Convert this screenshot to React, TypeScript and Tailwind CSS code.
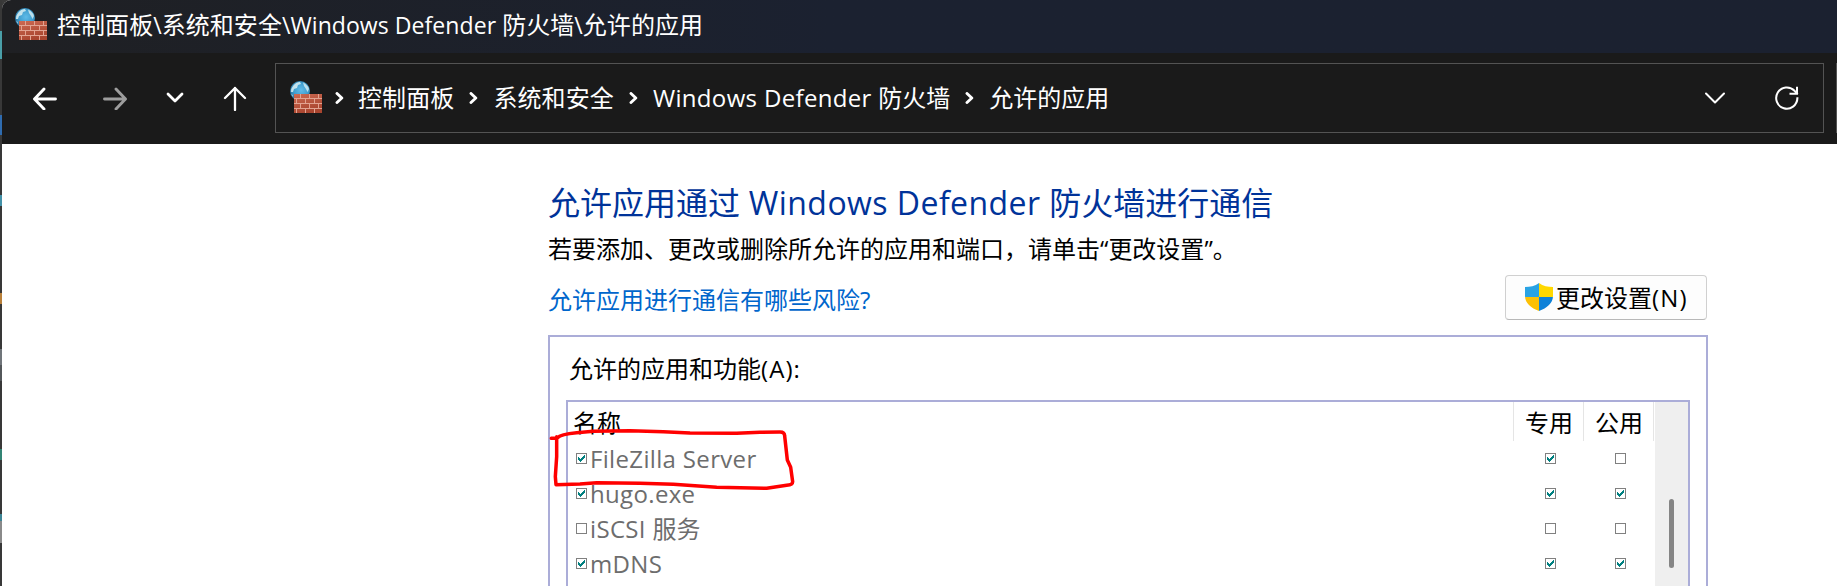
import React from "react";

const CJK = "font-['Noto_Sans_CJK_SC',sans-serif]";
const LATIN = "whitespace-pre font-['Open_Sans','Noto_Sans',sans-serif]";

/* Latin runs get a humanist face next to the Chinese glyphs. */
function Mixed({ text, latin = "tracking-[0.014em]" }: { text: string; latin?: string }) {
  const runs = text.match(/[\x20-\x7e]+|[^\x20-\x7e]+/g) ?? [];
  return (
    <>
      {runs.map((run, i) =>
        /^[\x20-\x7e]/.test(run) ? (
          <span key={i} className={LATIN + " " + latin}>
            {run}
          </span>
        ) : (
          <span key={i}>{run}</span>
        )
      )}
    </>
  );
}

function FirewallIcon({ id }: { id: string }) {
  return (
    <svg width="34" height="34" viewBox="0 0 34 34" className="shrink-0">
      <defs>
        <radialGradient id={id + "g"} cx="0.55" cy="0.45" r="0.6">
          <stop offset="0" stopColor="#5fbbe8" />
          <stop offset="0.6" stopColor="#3f9dce" />
          <stop offset="1" stopColor="#256f9c" />
        </radialGradient>
        <linearGradient id={id + "b"} x1="0" y1="0" x2="0.4" y2="1">
          <stop offset="0" stopColor="#cc6a52" />
          <stop offset="1" stopColor="#a9452f" />
        </linearGradient>
      </defs>
      <circle cx="11" cy="11" r="10" fill={`url(#${id}g)`} />
      <path d="M4 6 Q7 2 11 2 L12 4 L9 5 L8 8 L5 9 L4 12 L2 12 Q2 8 4 6Z" fill="#d9eff2" opacity="0.85" />
      <path d="M14 2.5 Q19 5 20 9 L18.5 12 L17 9 L15 6Z" fill="#d9eff2" opacity="0.8" />
      <path d="M2 14 L4 15 L4 17Z" fill="#d9eff2" opacity="0.6" />
      <rect x="5" y="14" width="28" height="19" fill={`url(#${id}b)`} />
      <path
        d="M5 18.5H33M5 23.5H33M5 28.5H33M11.5 14V18.5M20.5 14V18.5M29.5 14V18.5M7.5 18.5V23.5M16.5 18.5V23.5M25.5 18.5V23.5M11.5 23.5V28.5M20.5 23.5V28.5M29.5 23.5V28.5M7.5 28.5V33M16.5 28.5V33M25.5 28.5V33"
        stroke="#e2a391"
        strokeWidth="1"
        fill="none"
      />
    </svg>
  );
}

function Shield() {
  return (
    <svg width="28" height="28" viewBox="0 0 28 28" className="shrink-0">
      <defs>
        <clipPath id="shield">
          <path d="M14 0 C10 3 5 4 0 4 V13 C0 20 6 25 14 28 C22 25 28 20 28 13 V4 C23 4 18 3 14 0Z" />
        </clipPath>
      </defs>
      <g clipPath="url(#shield)">
        <rect width="14" height="14" fill="#2aa3e4" />
        <rect x="14" width="14" height="14" fill="#ffd800" />
        <rect y="14" width="14" height="14" fill="#fdc005" />
        <rect x="14" y="14" width="14" height="14" fill="#0f82d8" />
      </g>
    </svg>
  );
}

function Check({ on }: { on: boolean }) {
  return (
    <svg width="11" height="11" viewBox="0 0 11 11" shapeRendering="crispEdges" className="block shrink-0">
      <rect x="0.5" y="0.5" width="10" height="10" fill="#fff" stroke="#808080" />
      {on && <path d="M2 4h1v1h1v1h1v-1h1v-1h1v-1h1v-1h1v3h-1v1h-1v1h-1v1h-1v1h-1v-1h-1v-1h-1z" fill="#008080" />}
    </svg>
  );
}

function Crumb() {
  return (
    <svg width="9" height="12" viewBox="0 0 9 12" className="shrink-0" fill="none" stroke="#fff" strokeWidth="2.9" strokeLinecap="round" strokeLinejoin="round">
      <path d="M2 1.5 6.8 6 2 10.5" />
    </svg>
  );
}

const rows = [
  { name: "FileZilla Server", on: true, priv: true, pub: false },
  { name: "hugo.exe", on: true, priv: true, pub: true },
  { name: "iSCSI 服务", on: false, priv: false, pub: false },
  { name: "mDNS", on: true, priv: true, pub: true },
];

const nav = { fill: "none", strokeLinecap: "round", strokeLinejoin: "round" } as const;

export default function App() {
  return (
    <div className={"flex h-[586px] w-[1837px] overflow-hidden bg-[#3a3a3a] text-[24px] " + CJK}>
      <div className="flex w-[2px] shrink-0 flex-col bg-[#383838]">
        <div className="mt-[31px] h-[28px] bg-[#4a9fa8]" />
        <div className="mt-[56px] h-[20px] bg-[#2f6cb0]" />
        <div className="mt-[60px] h-[11px] bg-[#4391a8]" />
        <div className="mt-[87px] h-[11px] bg-[#b9803a]" />
        <div className="mt-[45px] h-[16px] bg-[#70757a]" />
        <div className="h-[16px] bg-[#53575a]" />
        <div className="mt-[68px] h-[11px] bg-[#328474]" />
        <div className="mt-[54px] h-[7px] bg-[#3d8595]" />
        <div className="h-[22px] bg-[#8a8a8a]" />
      </div>
      <div className="flex min-w-0 flex-1 flex-col overflow-hidden rounded-tl-[9px] bg-white">
        <header className="flex h-[53px] shrink-0 items-center bg-linear-to-r from-[#1f2023] via-[#1b2130] via-45% to-[#1b2130] pl-[12px] text-white">
          <div className="pb-[5px]"><FirewallIcon id="a" /></div>
          <div className="ml-[9px] whitespace-nowrap pb-[5px] leading-[36px] tracking-[0.05px]">
            <Mixed text="控制面板\系统和安全\Windows Defender 防火墙\允许的应用" latin="text-[0.96em]" />
          </div>
        </header>

        <nav className="flex h-[91px] shrink-0 items-start bg-[#1a1a1a] pt-[10px] text-white">
          <div className="flex h-[70px] w-[273px] shrink-0 items-center">
            <svg width="26" height="24" viewBox="0 0 26 24" className="ml-[30px]" {...nav} stroke="#fff" strokeWidth="2.9">
              <path d="M23.5 13H3M12 3 2.5 13 12 23" />
            </svg>
            <svg width="26" height="24" viewBox="0 0 26 24" className="ml-[44px]" {...nav} stroke="#9d9d9d" strokeWidth="2.9">
              <path d="M2.5 13H23M14 3 23.5 13 14 23" />
            </svg>
            <svg width="18" height="12" viewBox="0 0 18 12" className="ml-[38px]" {...nav} stroke="#fff" strokeWidth="2.8">
              <path d="M2 2 9 9 16 2" />
            </svg>
            <svg width="24" height="26" viewBox="0 0 24 26" className="ml-[39px]" {...nav} stroke="#fff" strokeWidth="2.3">
              <path d="M12 25V3M2 13 12 3 22 13" />
            </svg>
          </div>
          <div className="flex h-[70px] w-[1549px] shrink-0 items-center border border-[#535353] pl-[13px]">
            <div className="pb-[2px]"><FirewallIcon id="c" /></div>
            <div className="flex items-center whitespace-nowrap pl-[12px] leading-[36px]">
              <Crumb />
              <span className="ml-[14px] mr-[15px] pb-[2px] tracking-[0.1px]">控制面板</span>
              <Crumb />
              <span className="ml-[15px] mr-[15px] pb-[2px] tracking-[0.1px]">系统和安全</span>
              <Crumb />
              <span className="ml-[15px] mr-[15px] pb-[2px]"><Mixed text="Windows Defender 防火墙" /></span>
              <Crumb />
              <span className="ml-[15px] pb-[2px]">允许的应用</span>
            </div>
            <svg width="20" height="12" viewBox="0 0 20 12" className="ml-auto" {...nav} stroke="#fff" strokeWidth="2">
              <path d="M1 1.5 10 10.5 19 1.5" />
            </svg>
            <svg width="24" height="24" viewBox="0 0 24 24" className="ml-[50px] mr-[24px]" {...nav} stroke="#fff" strokeWidth="2" strokeLinecap="square" strokeLinejoin="miter">
              <path d="M22.4 12.3A10.6 10.6 0 1 1 19.5 4.8L22 7.3M22 1.8V7.8H15.5" />
            </svg>
          </div>
          <div className="ml-[12px] h-[70px] w-[10px] shrink-0 border border-[#535353]" />
        </nav>

        <main className="relative flex w-[1704px] flex-1 flex-col pl-[546px]">
          <h1 className="mt-[33px] h-[48px] whitespace-nowrap text-[32px] leading-[48px] text-[#003399]">
            <Mixed text="允许应用通过 Windows Defender 防火墙进行通信" />
          </h1>
          <p className="mt-[5px] h-[36px] whitespace-nowrap leading-[36px] text-black">
            若要添加、更改或删除所允许的应用和端口，请单击<span className={LATIN}>“</span>更改设置<span className={LATIN}>”</span>。
          </p>
          <div className="flex h-[69px] items-start justify-between">
            <a className="mt-[15px] whitespace-nowrap leading-[36px] text-[#0066cc]">
              <Mixed text="允许应用进行通信有哪些风险?" />
            </a>
            <button className="mt-[9px] mr-[-1px] flex h-[45px] w-[202px] shrink-0 items-center rounded-[4px] border border-[#d0d0d0] border-b-[#b8b8b8] bg-[#fdfdfd] pl-[19px] leading-[36px] text-black">
              <div className="pb-[2px]"><Shield /></div>
              <span className="ml-[3px] whitespace-nowrap"><Mixed text="更改设置(N)" latin="tracking-[0.05em]" /></span>
            </button>
          </div>
          <section className="mr-[-2px] flex flex-1 flex-col border-2 border-b-0 border-[#abadd8] pl-[16px] pr-[16px]">
            <div className="ml-[3px] mt-[13px] h-[50px] whitespace-nowrap leading-[36px] text-black">
              <Mixed text="允许的应用和功能(A):" latin="tracking-[0.045em]" />
            </div>
            <div className="flex flex-1 border-2 border-b-0 border-[#abadd8]">
              <div className="flex flex-1 flex-col">
                <div className="flex h-[39px] items-start leading-[36px] text-black">
                  <div className="flex-1 pl-[5px] pt-[2px]">名称</div>
                  <div className="h-[39px] w-[70px] border-l border-[#e5e5e5] pl-[11px] pt-[2px]">专用</div>
                  <div className="h-[39px] w-[71px] border-x border-[#e5e5e5] pl-[11px] pt-[2px]">公用</div>
                </div>
                {rows.map((r) => (
                  <div key={r.name} className="flex h-[35px] items-center leading-[33px] text-[#6d6d6d]">
                    <div className="flex flex-1 items-center pl-[8px]">
                      <Check on={r.on} />
                      <span className="ml-[3px] whitespace-nowrap pb-[2px]"><Mixed text={r.name} /></span>
                    </div>
                    <div className="w-[70px]"><Check on={r.priv} /></div>
                    <div className="w-[39px]"><Check on={r.pub} /></div>
                  </div>
                ))}
              </div>
              <div className="ml-px flex w-[33px] shrink-0 flex-col bg-[#efefef]">
                <div className="ml-[14px] mt-[97px] h-[69px] w-[5px] rounded-full bg-[#858585]" />
              </div>
            </div>
          </section>
          <svg width="290" height="200" viewBox="0 0 870 600" className="pointer-events-none absolute left-[528px] top-[186px]" {...nav} stroke="#ff0000" strokeWidth="10.5">
            <path d="M64 325 L82 324 Q92 312 140 308 L190 304 L300 302 L400 305 L480 309 L620 310 L690 307 L750 306 Q764 306 764 318 L772 390 L782 412 L788 455 Q788 464 770 466 L710 475 L560 472 L430 463 L330 460 L200 458 L150 462 L78 464 L76 440 L80 380 L80 320" />
          </svg>
        </main>
      </div>
    </div>
  );
}
